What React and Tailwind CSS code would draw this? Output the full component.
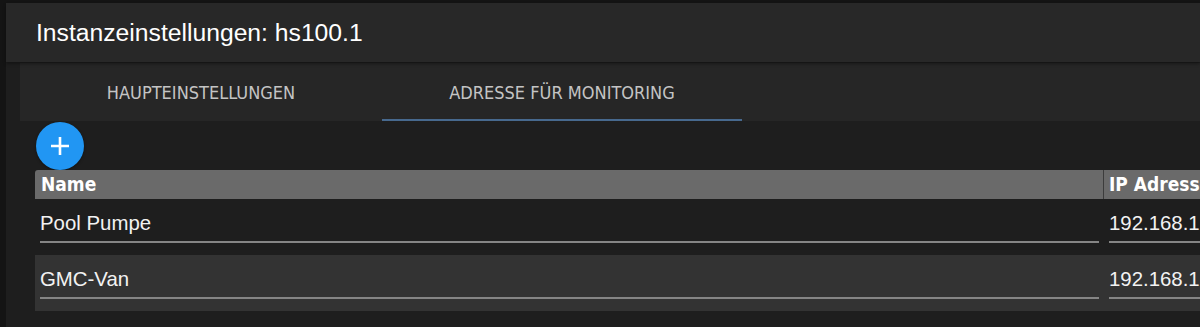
import React from "react";

const rows = [
  { name: "Pool Pumpe", ip: "192.168.178.41" },
  { name: "GMC-Van", ip: "192.168.178.52" },
];

const tabFont = { fontFamily: '"DejaVu Sans Condensed", "DejaVu Sans", Verdana, sans-serif' };
const textFont = { fontFamily: '"Liberation Sans", Arial, Helvetica, sans-serif' };

const Field = ({ value }) => (
  <div
    className="mt-[12px] pb-[6px] text-[20.4px] leading-[24px] text-[#f2f2f2] border-b-2 border-[#858585] whitespace-nowrap overflow-hidden"
    style={textFont}
  >
    {value}
  </div>
);

const App = () => {
  return (
    <div className="w-full h-[327px] bg-[#141414] overflow-hidden">
      <div className="ml-[6px] mt-[3px] h-full bg-[#1e1e1e] flex flex-col">
        <div
          className="h-[59px] shrink-0 bg-[#282828] pl-[30px] flex items-center text-white text-[24.7px] shadow-[0_2px_3px_rgba(0,0,0,0.35)] relative z-10"
          style={textFont}
        >
          Instanzeinstellungen: hs100.1
        </div>

        <div className="ml-[14px] mt-px h-[58px] shrink-0 bg-[#262626] flex" style={tabFont}>
          <div className="w-[362px] flex items-center justify-center text-[18px] text-[#c4c4c4]">
            HAUPTEINSTELLUNGEN
          </div>
          <div className="w-[360px] flex flex-col">
            <div className="flex-1 flex items-center justify-center text-[18px] text-[#c4c4c4] pt-[2px]">
              ADRESSE FÜR MONITORING
            </div>
            <div className="h-[2px] bg-[#47698e]" />
          </div>
        </div>

        <button className="ml-[30px] mt-px w-[48px] h-[48px] shrink-0 rounded-full bg-[#2196f3] flex items-center justify-center shadow-[0_1px_3px_rgba(0,0,0,0.4)]">
          <svg width="20" height="20" viewBox="0 0 20 20">
            <path d="M10 1v18M1 10h18" stroke="white" strokeWidth="2.6" strokeLinecap="butt" />
          </svg>
        </button>

        <div className="ml-[29px] w-[1300px]">
          <div
            className="flex h-[29px] text-white font-bold text-[19px] leading-[29px]"
            style={tabFont}
          >
            <div className="w-[1068px] bg-[#6a6a6a] pl-[6px] rounded-tl-[3px]">Name</div>
            <div className="w-px bg-[#3c3c3c]" />
            <div className="flex-1 bg-[#6a6a6a] pl-[5px]">IP Adresse</div>
          </div>
          {rows.map((row, i) => (
            <div
              key={row.name}
              className={`flex h-[56px] ${i % 2 === 1 ? "bg-[#333333]" : "bg-[#1e1e1e]"}`}
            >
              <div className="w-[1069px] px-[5px]">
                <Field value={row.name} />
              </div>
              <div className="flex-1 pl-[5px] pr-[5px]">
                <Field value={row.ip} />
              </div>
            </div>
          ))}
        </div>
      </div>
    </div>
  );
};

export default App;
